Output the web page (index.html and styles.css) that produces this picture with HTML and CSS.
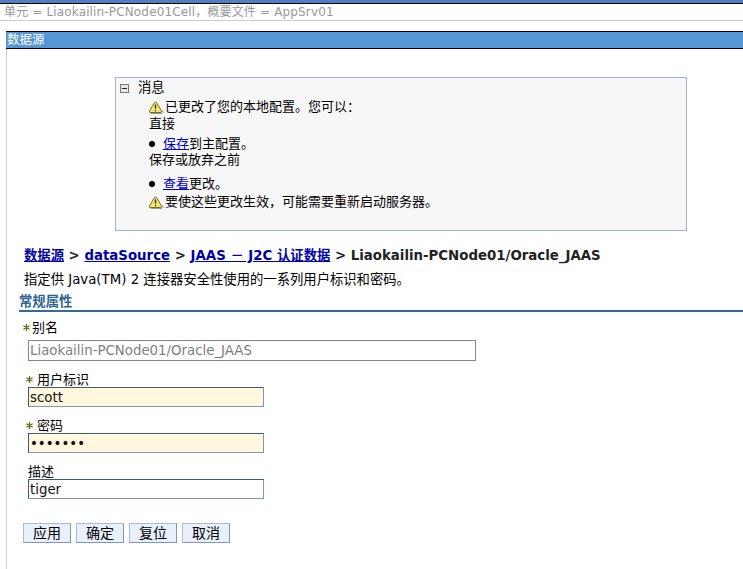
FILE: index.html
```html
<!DOCTYPE html>
<html lang="zh">
<head>
<meta charset="utf-8">
<title>数据源</title>
<link rel="stylesheet" href="styles.css">
</head>
<body>
<div class="topstrip"></div>
<div class="context">单元 = Liaokailin-PCNode01Cell，概要文件 = AppSrv01</div>
<div class="main">
  <div class="titlebar">数据源</div>
  <div class="msgbox">
    <div class="msghead">
      <svg class="toggle" width="9" height="9" viewBox="0 0 9 9"><rect x="0.5" y="0.5" width="8" height="8" fill="#e8e8e8" stroke="#777"/><path d="M2 4.5h5" stroke="#222"/></svg>
      <span>消息</span>
    </div>
    <div class="msgbody">
      <div class="warnline">
        <svg class="warn" width="15" height="13" viewBox="0 0 15 13"><path d="M5.5 1.6 Q6.5 .4 7.5 1.6 L12.6 10.2 Q13 11.5 11.8 11.5 H1.2 Q0 11.5 .4 10.2 Z" fill="#f6e96c" stroke="#6f6a22"/><path d="M13.5 9.5 L14.5 12 M2 12.5 H13" stroke="#999" stroke-width="1"/><path d="M6.5 3.6v4.2M6.5 8.9v1.4" stroke="#222" stroke-width="1.3"/></svg>已更改了您的本地配置。您可以：
      </div>
      <div class="plain">直接</div>
      <div class="bullet"><i class="dot"></i><span><a href="#">保存</a>到主配置。</span></div>
      <div class="plain tight">保存或放弃之前</div>
      <div class="bullet second"><i class="dot"></i><span><a href="#">查看</a>更改。</span></div>
      <div class="warnline last">
        <svg class="warn" width="15" height="13" viewBox="0 0 15 13"><path d="M5.5 1.6 Q6.5 .4 7.5 1.6 L12.6 10.2 Q13 11.5 11.8 11.5 H1.2 Q0 11.5 .4 10.2 Z" fill="#f6e96c" stroke="#6f6a22"/><path d="M13.5 9.5 L14.5 12 M2 12.5 H13" stroke="#999" stroke-width="1"/><path d="M6.5 3.6v4.2M6.5 8.9v1.4" stroke="#222" stroke-width="1.3"/></svg>要使这些更改生效，可能需要重新启动服务器。
      </div>
    </div>
  </div>
  <div class="crumbs"><a href="#">数据源</a> &gt; <a href="#">dataSource</a> &gt; <a href="#">JAAS － J2C 认证数据</a> &gt; Liaokailin-PCNode01/Oracle_JAAS</div>
  <div class="desc">指定供 Java(TM) 2 连接器安全性使用的一系列用户标识和密码。</div>
  <div class="section">常规属性</div>
  <form class="form">
    <div class="field first">
      <label class="alias"><svg class="req" width="7" height="7" viewBox="0 0 7 7"><path d="M3.5 0v7M.4 1.7l6.2 3.6M.4 5.3l6.2-3.6" stroke="#5c6a12" stroke-width="1.2"/></svg>别名</label>
      <input class="wide" type="text" value="Liaokailin-PCNode01/Oracle_JAAS" disabled>
    </div>
    <div class="field">
      <label class="need-label"><svg class="req" width="7" height="7" viewBox="0 0 7 7"><path d="M3.5 0v7M.4 1.7l6.2 3.6M.4 5.3l6.2-3.6" stroke="#5c6a12" stroke-width="1.2"/></svg>用户标识</label>
      <input class="short need" type="text" value="scott">
    </div>
    <div class="field">
      <label class="need-label"><svg class="req" width="7" height="7" viewBox="0 0 7 7"><path d="M3.5 0v7M.4 1.7l6.2 3.6M.4 5.3l6.2-3.6" stroke="#5c6a12" stroke-width="1.2"/></svg>密码</label>
      <input class="short need" type="password" value="1234567">
    </div>
    <div class="field">
      <label>描述</label>
      <input class="short" type="text" value="tiger">
    </div>
    <div class="buttons">
      <button type="button">应用</button><button type="button">确定</button><button type="button">复位</button><button type="button">取消</button>
    </div>
  </form>
</div>
</body>
</html>
```
FILE: styles.css
```css
* { box-sizing: border-box; }
html, body { margin: 0; padding: 0; background: #fff; }
body {
  width: 743px; height: 569px; overflow: hidden;
  font: 13.33px/16px "DejaVu Sans", "Noto Sans CJK SC", sans-serif;
  color: #000;
}
a { color: #0000cc; text-decoration: underline; }
.topstrip { height: 4px; background: #4f7fc0; border-bottom: 1px solid #000; }
.context {
  height: 17px; padding: 0 0 0 4px; font-size: 12px; letter-spacing: .15px; line-height: 17px;
  color: #999; border-bottom: 1px solid #ccc; background: #fdfefe;
}
.main { margin: 10px 0 0 6px; border-left: 1px solid #ccc; height: 538px; }
.titlebar {
  margin-left: -1px; height: 18px; line-height: 16px; padding-left: 1px; color: #fff;
  font-size: 12.5px;
  background: #5596d6; border-top: 1px solid #000; border-bottom: 1px solid #000;
}
.msgbox {
  width: 572px; height: 154px; margin: 28px 0 0 108px;
  background: #f7f7f7; border: 1px solid #9db2cc;
}
.msghead { display: flex; align-items: center; height: 16px; margin-top: 2px; padding-left: 4px; }
.toggle { margin-right: 9px; }
.msgbody { padding: 3px 0 0 33px; font-size: 13px; }
.warnline { display: flex; align-items: center; height: 16px; }
.warnline.last { margin-top: 2px; }
.warn { margin-right: 1px; flex: none; }
.plain { height: 16px; margin-top: 1px; }
.plain.tight { margin-top: 0; }
.bullet { display: flex; align-items: center; height: 16px; margin-top: 4px; }
.bullet.second { margin-top: 8px; }
.dot { width: 6px; height: 6px; border-radius: 50%; background: #000; margin-right: 8px; }
.crumbs { margin: 16px 0 0 17px; line-height: 17px; font-weight: bold; color: #222; white-space: nowrap; }
.crumbs a { color: #0000aa; }
.desc { margin: 8px 0 0 17px; }
.section {
  margin: 6px 0 0 12px; height: 18px; line-height: 16px; font-weight: bold;
  color: #2f6390; border-bottom: 2px solid #336b95;
}
.form { padding-left: 21px; }
.field { margin-top: 11px; display: flex; flex-direction: column; align-items: flex-start; }
.field.first { margin-top: 8px; }
.field label { display: flex; align-items: center; line-height: 15px; height: 15px; white-space: nowrap; font-size: 13px; }
.field label.alias { margin-left: -5px; }
.field label.need-label { margin-left: -2px; }
.req { flex: none; margin-right: 2px; }
.field label.need-label .req { margin-right: 4px; }
input {
  font: 13.33px "DejaVu Sans", sans-serif; color: #111; height: 20px; padding: 0 1px;
  border: 1px solid #7e98b2; border-top-color: #3d5a78; border-left-color: #3d5a78; background: #fff; border-radius: 0;
  margin: 0; display: block; outline: 0;
}
.wide { width: 448px; height: 21px; color: #808080; margin-top: 5px; background: #fff; border-color: #808888; }
.short { width: 236px; }
.need { background: #fff7de; }
.buttons { display: flex; gap: 5px; margin: 24px 0 0 -5px; }
button {
  width: 48px; height: 20px; padding: 0; font: 14px/18px "DejaVu Sans", "Noto Sans CJK SC", sans-serif; color: #000;
  background: #e8f0fb; border: 1px solid #7e99b5; border-top-color: #a9bdd2; border-left-color: #a9bdd2; border-radius: 0;
}
```
